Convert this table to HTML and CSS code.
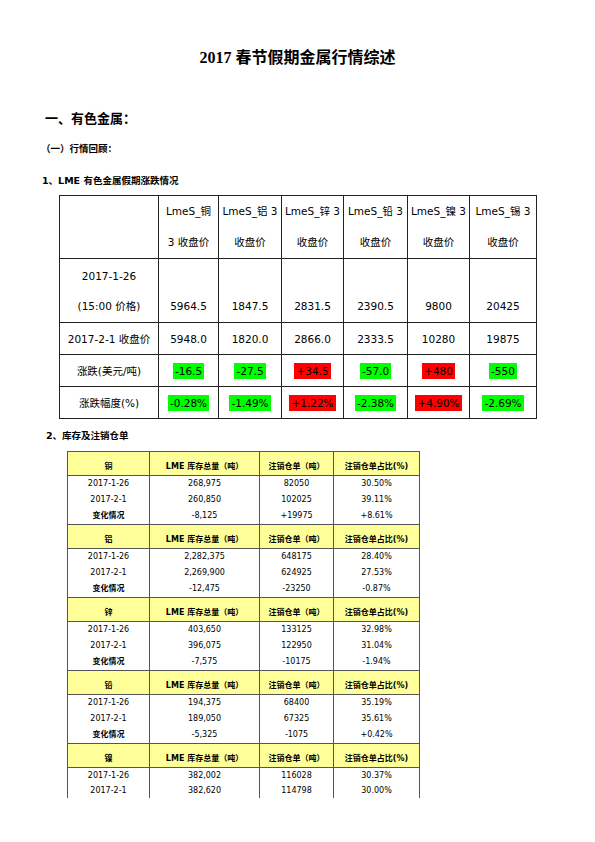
FILE: index.html
```html
<!DOCTYPE html>
<html lang="zh-CN">
<head>
<meta charset="utf-8">
<title>2017春节假期金属行情综述</title>
<link rel="stylesheet" href="styles.css">
</head>
<body>
<main class="page">
  <h1 class="title">2017 春节假期金属行情综述</h1>
  <h2 class="sec">一、有色金属：</h2>
  <h3 class="sub">（一）行情回顾：</h3>
  <h4 class="item item-first">1、LME 有色金属假期涨跌情况</h4>

  <table class="t1">
    <colgroup>
      <col class="c-label"><col class="c-60"><col class="c-63"><col class="c-62"><col class="c-64"><col class="c-62"><col class="c-67">
    </colgroup>
    <tr class="r-head">
      <td></td>
      <td>LmeS_铜<br>3 收盘价</td>
      <td>LmeS_铝 3<br>收盘价</td>
      <td>LmeS_锌 3<br>收盘价</td>
      <td>LmeS_铅 3<br>收盘价</td>
      <td>LmeS_镍 3<br>收盘价</td>
      <td>LmeS_锡 3<br>收盘价</td>
    </tr>
    <tr class="r-open">
      <td class="lbl2">2017-1-26<br>(15:00 价格)</td>
      <td>5964.5</td><td>1847.5</td><td>2831.5</td><td>2390.5</td><td>9800</td><td>20425</td>
    </tr>
    <tr class="r-one">
      <td>2017-2-1 收盘价</td>
      <td>5948.0</td><td>1820.0</td><td>2866.0</td><td>2333.5</td><td>10280</td><td>19875</td>
    </tr>
    <tr class="r-one">
      <td>涨跌(美元/吨)</td>
      <td><span class="hl down">-16.5</span></td>
      <td><span class="hl down">-27.5</span></td>
      <td><span class="hl up">+34.5</span></td>
      <td><span class="hl down">-57.0</span></td>
      <td><span class="hl up">+480</span></td>
      <td><span class="hl down">-550</span></td>
    </tr>
    <tr class="r-one">
      <td>涨跌幅度(%)</td>
      <td><span class="hl down">-0.28%</span></td>
      <td><span class="hl down">-1.49%</span></td>
      <td><span class="hl up">+1.22%</span></td>
      <td><span class="hl down">-2.38%</span></td>
      <td><span class="hl up">+4.90%</span></td>
      <td><span class="hl down">-2.69%</span></td>
    </tr>
  </table>

  <h4 class="item item-second">2、库存及注销仓单</h4>

  <table class="t2">
    <colgroup>
      <col class="d-82"><col class="d-110"><col class="d-74"><col class="d-86">
    </colgroup>
    <tr class="hd"><td>铜</td><td>LME 库存总量（吨）</td><td>注销仓单（吨）</td><td>注销仓单占比(%)</td></tr>
    <tr><td>2017-1-26</td><td>268,975</td><td>82050</td><td>30.50%</td></tr>
    <tr><td>2017-2-1</td><td>260,850</td><td>102025</td><td>39.11%</td></tr>
    <tr><td class="b">变化情况</td><td>-8,125</td><td>+19975</td><td>+8.61%</td></tr>

    <tr class="hd"><td>铝</td><td>LME 库存总量（吨）</td><td>注销仓单（吨）</td><td>注销仓单占比(%)</td></tr>
    <tr><td>2017-1-26</td><td>2,282,375</td><td>648175</td><td>28.40%</td></tr>
    <tr><td>2017-2-1</td><td>2,269,900</td><td>624925</td><td>27.53%</td></tr>
    <tr><td class="b">变化情况</td><td>-12,475</td><td>-23250</td><td>-0.87%</td></tr>

    <tr class="hd"><td>锌</td><td>LME 库存总量（吨）</td><td>注销仓单（吨）</td><td>注销仓单占比(%)</td></tr>
    <tr><td>2017-1-26</td><td>403,650</td><td>133125</td><td>32.98%</td></tr>
    <tr><td>2017-2-1</td><td>396,075</td><td>122950</td><td>31.04%</td></tr>
    <tr><td class="b">变化情况</td><td>-7,575</td><td>-10175</td><td>-1.94%</td></tr>

    <tr class="hd"><td>铅</td><td>LME 库存总量（吨）</td><td>注销仓单（吨）</td><td>注销仓单占比(%)</td></tr>
    <tr><td>2017-1-26</td><td>194,375</td><td>68400</td><td>35.19%</td></tr>
    <tr><td>2017-2-1</td><td>189,050</td><td>67325</td><td>35.61%</td></tr>
    <tr><td class="b">变化情况</td><td>-5,325</td><td>-1075</td><td>+0.42%</td></tr>

    <tr class="hd"><td>镍</td><td>LME 库存总量（吨）</td><td>注销仓单（吨）</td><td>注销仓单占比(%)</td></tr>
    <tr><td>2017-1-26</td><td>382,002</td><td>116028</td><td>30.37%</td></tr>
    <tr class="last"><td>2017-2-1</td><td>382,620</td><td>114798</td><td>30.00%</td></tr>
  </table>
</main>
</body>
</html>
```

FILE: styles.css
```css
html, body {
  margin: 0;
  padding: 0;
  background: #ffffff;
}

body {
  font-family: "DejaVu Sans", "Noto Sans CJK SC", sans-serif;
  color: #000000;
}

.page {
  width: 595px;
  display: flex;
  flex-direction: column;
  align-items: flex-start;
}

.title {
  align-self: stretch;
  margin: 48px 0 0;
  font-family: "Liberation Serif", "Noto Sans CJK SC", serif;
  font-size: 16px;
  line-height: 20px;
  font-weight: 700;
  text-align: center;
}

.sec {
  margin: 41px 0 0 45px;
  font-family: "Noto Sans CJK SC", sans-serif;
  font-size: 13px;
  line-height: 18px;
  font-weight: 700;
}

.sub {
  margin: 15px 0 0 41px;
  font-family: "DejaVu Sans", "Noto Sans CJK SC", sans-serif;
  font-size: 9.5px;
  line-height: 14px;
  font-weight: 700;
}

.item {
  margin: 0;
  font-family: "DejaVu Sans", "Noto Sans CJK SC", sans-serif;
  font-size: 9.5px;
  line-height: 14px;
  font-weight: 700;
}

.item-first {
  margin: 18px 0 0 42px;
}

.item-second {
  margin: 10px 0 0 46px;
}

/* ---------- Table 1 ---------- */
.t1 {
  margin: 7px 0 0 59px;
  width: 477px;
  table-layout: fixed;
  border-collapse: collapse;
  font-size: 10.5px;
}

.t1 .c-label { width: 99px; }
.t1 .c-60 { width: 60px; }
.t1 .c-63 { width: 63px; }
.t1 .c-62 { width: 62px; }
.t1 .c-64 { width: 64px; }
.t1 .c-67 { width: 67px; }

.t1 td {
  border: 1px solid #222222;
  padding: 0;
  text-align: center;
  white-space: nowrap;
}

.t1 .r-head { height: 63px; }
.t1 .r-head td {
  vertical-align: top;
  line-height: 31px;
}

.t1 .r-open { height: 64px; }
.t1 .r-open td {
  vertical-align: bottom;
  line-height: 30px;
  padding-bottom: 1px;
}
.t1 .r-open td.lbl2 {
  vertical-align: top;
  padding-top: 2px;
  padding-bottom: 0;
}

.t1 .r-one { height: 32px; }
.t1 .r-one td {
  vertical-align: middle;
  line-height: 16px;
}

.hl {
  display: inline-block;
  line-height: 16px;
  padding: 0 2px;
}
.hl.down { background: #00ff00; }
.hl.up { background: #ff0000; }

/* ---------- Table 2 ---------- */
.t2 {
  margin: 8px 0 0 67px;
  width: 352px;
  table-layout: fixed;
  border-collapse: collapse;
  font-size: 8px;
}

.t2 .d-82 { width: 82px; }
.t2 .d-110 { width: 110px; }
.t2 .d-74 { width: 74px; }
.t2 .d-86 { width: 86px; }

.t2 td {
  border-left: 1px solid #555555;
  border-right: 1px solid #555555;
  padding: 0;
  height: 16px;
  line-height: 16px;
  text-align: center;
  white-space: nowrap;
}

.t2 .last td {
  height: 14px;
  line-height: 14px;
  vertical-align: top;
}

.t2 td.b {
  font-weight: 700;
}

.t2 .hd td {
  height: 21px;
  background: #ffff99;
  border-top: 1px solid #555555;
  border-bottom: 1px solid #555555;
  vertical-align: bottom;
  line-height: 12px;
  padding-bottom: 2px;
  font-weight: 700;
  font-size: 8px;
}
```
